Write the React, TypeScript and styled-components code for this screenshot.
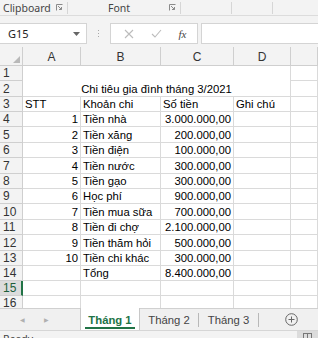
import React from "react";
import styled, { createGlobalStyle } from "styled-components";

const Global = createGlobalStyle`
  html, body { margin: 0; padding: 0; background: #f3f3f3; }
  body { width: 318px; height: 338px; overflow: hidden; }
`;

const UI = `"Noto Sans", "Open Sans", sans-serif`;
const CELL = `"Liberation Sans", Arial, sans-serif`;
const GRID = "#dadada";
const HEAD_BORDER = "#cfcfcf";
const GREEN = "#217346";

const Page = styled.div`
  width: 318px;
  height: 338px;
  display: flex;
  flex-direction: column;
  background: #f3f3f3;
  overflow: hidden;
`;

const RibbonLabels = styled.div`
  height: 15px;
  display: flex;
  align-items: center;
  border-bottom: 1px solid #dcdcdc;
  background: #f3f3f3;
  font-family: ${UI};
  font-size: 10.5px;
  color: #444;
`;

const Group = styled.div<{ $w: number }>`
  width: ${(p) => p.$w}px;
  height: 12px;
  flex: none;
  display: flex;
  align-items: center;
  justify-content: space-between;
  padding: 0 4px 0 3px;
  box-sizing: border-box;
  border-right: 1px solid #d6d6d6;
`;

const GroupName = styled.span<{ $indent?: number }>`
  padding-left: ${(p) => p.$indent ?? 0}px;
  line-height: 12px;
`;

const FormulaRow = styled.div`
  height: 21px;
  margin-top: 7px;
  display: flex;
  align-items: stretch;
  font-family: ${UI};
`;

const NameBox = styled.div`
  width: 87px;
  flex: none;
  background: #fff;
  border: 1px solid #d4d4d4;
  border-left: none;
  box-sizing: border-box;
  display: flex;
  align-items: center;
  justify-content: space-between;
  padding: 0 6px 0 8px;
  font-size: 11px;
  color: #222;
`;

const Grip = styled.div`
  width: 23px;
  flex: none;
  display: flex;
  flex-direction: column;
  align-items: center;
  justify-content: center;
  gap: 2px;
`;

const Dot = styled.span`
  width: 1px;
  height: 1px;
  background: #a8a8a8;
`;

const FxBox = styled.div`
  width: 88px;
  flex: none;
  background: #fff;
  border: 1px solid #d4d4d4;
  box-sizing: border-box;
  display: flex;
  align-items: center;
  justify-content: space-around;
  padding: 0 2px 0 4px;
  color: #b8b8b8;
`;

const Fx = styled.span`
  font-family: "Liberation Serif", serif;
  font-style: italic;
  font-size: 11px;
  color: #444;
`;

const FormulaInput = styled.div`
  flex: 1;
  margin-left: 3px;
  background: #fff;
  border: 1px solid #d4d4d4;
  border-right: none;
`;

const Sheet = styled.div`
  margin-top: 3px;
  height: 261px;
  overflow: hidden;
  background: #fff;
  display: grid;
  grid-template-columns: 23px 58px 80px 73px 57px 1fr;
  grid-template-rows: 19px;
  grid-auto-rows: auto;
  font-family: ${CELL};
`;

const Corner = styled.div`
  background: #f3f3f3;
  border-right: 1px solid ${HEAD_BORDER};
  border-bottom: 1px solid ${HEAD_BORDER};
  display: flex;
  align-items: flex-end;
  justify-content: flex-end;
  padding: 0 2px 2px 0;
`;

const ColHead = styled.div`
  background: #f3f3f3;
  border-right: 1px solid ${HEAD_BORDER};
  border-bottom: 1px solid ${HEAD_BORDER};
  display: flex;
  align-items: flex-end;
  justify-content: center;
  font-size: 12px;
  color: #333;
  line-height: 16px;
`;

const RowHead = styled.div<{ $h: number; $sel?: boolean }>`
  height: ${(p) => p.$h}px;
  box-sizing: border-box;
  background: ${(p) => (p.$sel ? "#dcdcdc" : "#f3f3f3")};
  border-right: ${(p) => (p.$sel ? `2px solid ${GREEN}` : `1px solid ${HEAD_BORDER}`)};
  border-bottom: 1px solid ${HEAD_BORDER};
  display: flex;
  align-items: flex-end;
  padding-left: 3px;
  font-size: 12px;
  line-height: 14px;
  color: ${(p) => (p.$sel ? "#1d5e3a" : "#333")};
`;

const Cell = styled.div<{ $right?: boolean }>`
  box-sizing: border-box;
  border-right: 1px solid ${GRID};
  border-bottom: 1px solid ${GRID};
  display: flex;
  align-items: flex-end;
  justify-content: ${(p) => (p.$right ? "flex-end" : "flex-start")};
  padding: 0 2px 0 2px;
  font-size: 11.3px;
  line-height: 13px;
  color: #000;
  white-space: nowrap;
  overflow: hidden;
`;

const Merged = styled(Cell)`
  grid-column: span 4;
  grid-row: span 2;
  justify-content: center;
  overflow: visible;
`;

const TabBar = styled.div`
  height: 21px;
  flex: none;
  display: flex;
  align-items: stretch;
  border-top: 1px solid #d0d0d0;
  background: #f0f0f0;
  font-family: ${CELL};
  font-size: 11.3px;
`;

const Nav = styled.div`
  width: 80px;
  flex: none;
  display: flex;
  align-items: center;
  gap: 19px;
  padding-left: 20px;
  box-sizing: border-box;
  color: #b0b0b0;
  font-size: 6px;
`;

const Tab = styled.div<{ $active?: boolean; $w: number }>`
  width: ${(p) => p.$w}px;
  flex: none;
  box-sizing: border-box;
  display: flex;
  align-items: center;
  justify-content: center;
  position: relative;
  background: ${(p) => (p.$active ? "#fff" : "transparent")};
  border-left: ${(p) => (p.$active ? "1px solid #c8c8c8" : "none")};
  border-right: ${(p) => (p.$active ? "1px solid #c8c8c8" : "none")};
  margin-top: ${(p) => (p.$active ? "-1px" : "0")};
  color: ${(p) => (p.$active ? GREEN : "#444")};
  font-weight: ${(p) => (p.$active ? 700 : 400)};
`;

const TabLabel = styled.span<{ $active?: boolean }>`
  padding: 0 3px;
  line-height: 14px;
  border-bottom: 2px solid ${(p) => (p.$active ? GREEN : "transparent")};
  margin-top: 3px;
`;

const TabSep = styled.span`
  width: 1px;
  height: 14px;
  align-self: center;
  background: #b8b8b8;
`;

const AddArea = styled.div`
  flex: 1;
  display: flex;
  align-items: center;
  justify-content: flex-end;
  padding-right: 20px;
`;

const StatusBar = styled.div`
  flex: 1;
  display: flex;
  justify-content: space-between;
  border-top: 1px solid #d6d6d6;
  background: #f3f3f3;
  overflow: hidden;
  font-family: ${UI};
  font-size: 10.5px;
  color: #444;
`;

const StatusText = styled.span`
  padding: 2px 0 0 3px;
  line-height: 12px;
`;

const ViewBtn = styled.div`
  width: 21px;
  background: #dcdcdc;
  display: flex;
  justify-content: center;
  padding-top: 2px;
`;

const Launcher = () => (
  <svg width="7" height="7" viewBox="0 0 7 7">
    <path d="M0.5 6.5V0.5H6.5" fill="none" stroke="#8a8a8a" strokeWidth="1" />
    <path d="M2 2L5.5 5.5M3 5.5H5.5V3" fill="none" stroke="#8a8a8a" strokeWidth="1" />
  </svg>
);

type Row = { a?: string; b?: string; c?: string; d?: string; numA?: boolean; h: number };

const heights = [15, 16, 15, 15, 16, 15, 16, 15, 15, 16, 15, 16, 15, 15, 15, 15];

const body: Row[] = [
  { a: "STT", b: "Khoản chi", c: "Số tiền", d: "Ghi chú", h: heights[2] },
  { a: "1", b: "Tiền nhà", c: "3.000.000,00", numA: true, h: heights[3] },
  { a: "2", b: "Tiền xăng", c: "200.000,00", numA: true, h: heights[4] },
  { a: "3", b: "Tiền điện", c: "100.000,00", numA: true, h: heights[5] },
  { a: "4", b: "Tiền nước", c: "300.000,00", numA: true, h: heights[6] },
  { a: "5", b: "Tiền gạo", c: "300.000,00", numA: true, h: heights[7] },
  { a: "6", b: "Học phí", c: "900.000,00", numA: true, h: heights[8] },
  { a: "7", b: "Tiền mua sữa", c: "700.000,00", numA: true, h: heights[9] },
  { a: "8", b: "Tiền đi chợ", c: "2.100.000,00", numA: true, h: heights[10] },
  { a: "9", b: "Tiền thăm hỏi", c: "500.000,00", numA: true, h: heights[11] },
  { a: "10", b: "Tiền chi khác", c: "300.000,00", numA: true, h: heights[12] },
  { b: "Tổng", c: "8.400.000,00", h: heights[13] },
  { h: heights[14] },
  { h: heights[15] },
];

export default function App() {
  return (
    <>
      <Global />
      <Page>
        <RibbonLabels>
          <Group $w={68}>
            <GroupName>Clipboard</GroupName>
            <Launcher />
          </Group>
          <Group $w={113}>
            <GroupName $indent={37}>Font</GroupName>
            <Launcher />
          </Group>
          <Group $w={51} />
          <Group $w={41} />
        </RibbonLabels>

        <FormulaRow>
          <NameBox>
            <span>G15</span>
            <svg width="7" height="4" viewBox="0 0 7 4">
              <path d="M0 0H7L3.5 4Z" fill="#666" />
            </svg>
          </NameBox>
          <Grip>
            <Dot />
            <Dot />
            <Dot />
          </Grip>
          <FxBox>
            <svg width="10" height="10" viewBox="0 0 10 10">
              <path d="M1 1L9 9M9 1L1 9" stroke="#bcbcbc" strokeWidth="1.1" />
            </svg>
            <svg width="11" height="9" viewBox="0 0 11 9">
              <path d="M1 5L4 8L10 1" fill="none" stroke="#bcbcbc" strokeWidth="1.1" />
            </svg>
            <Fx>fx</Fx>
          </FxBox>
          <FormulaInput />
        </FormulaRow>

        <Sheet>
          <Corner>
            <svg width="7" height="7" viewBox="0 0 7 7">
              <path d="M7 0V7H0Z" fill="#b9b9b9" />
            </svg>
          </Corner>
          <ColHead>A</ColHead>
          <ColHead>B</ColHead>
          <ColHead>C</ColHead>
          <ColHead>D</ColHead>
          <ColHead />

          <RowHead $h={heights[0]}>1</RowHead>
          <Merged>Chi tiêu gia đình tháng 3/2021</Merged>
          <Cell />
          <RowHead $h={heights[1]}>2</RowHead>
          <Cell />

          {body.map((r, i) => (
            <React.Fragment key={i}>
              <RowHead $h={r.h} $sel={i + 3 === 15}>
                {i + 3}
              </RowHead>
              <Cell $right={r.numA}>{r.a}</Cell>
              <Cell>{r.b}</Cell>
              <Cell $right={i > 0}>{r.c}</Cell>
              <Cell>{r.d}</Cell>
              <Cell />
            </React.Fragment>
          ))}
        </Sheet>

        <TabBar>
          <Nav>
            <span>◀</span>
            <span>▶</span>
          </Nav>
          <Tab $active $w={60}>
            <TabLabel $active>Tháng 1</TabLabel>
          </Tab>
          <Tab $w={58}>
            <TabLabel>Tháng 2</TabLabel>
          </Tab>
          <TabSep />
          <Tab $w={59}>
            <TabLabel>Tháng 3</TabLabel>
          </Tab>
          <TabSep />
          <AddArea>
            <svg width="13" height="13" viewBox="0 0 13 13">
              <circle cx="6.5" cy="6.5" r="5.8" fill="none" stroke="#666" strokeWidth="1" />
              <path d="M6.5 3.5V9.5M3.5 6.5H9.5" stroke="#666" strokeWidth="1" />
            </svg>
          </AddArea>
        </TabBar>

        <StatusBar>
          <StatusText>Ready</StatusText>
          <ViewBtn>
            <svg width="9" height="6" viewBox="0 0 9 6">
              <path d="M0.5 0V6M4.5 0V6M8.5 0V6M0 0.5H9" stroke="#777" strokeWidth="1" />
            </svg>
          </ViewBtn>
        </StatusBar>
      </Page>
    </>
  );
}
